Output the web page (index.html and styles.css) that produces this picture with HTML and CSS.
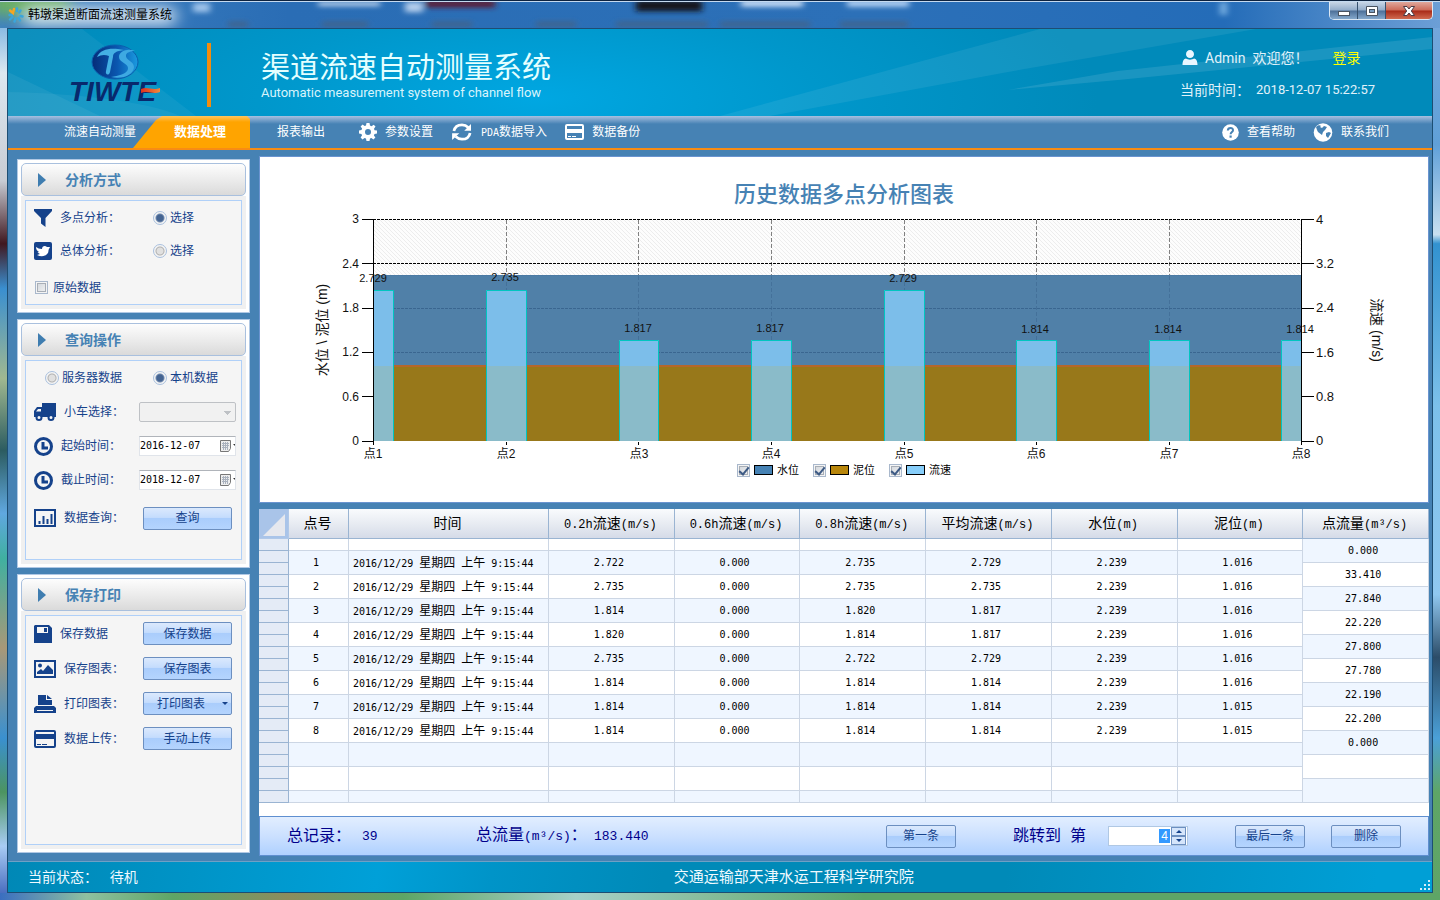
FILE: index.html
```html
<!DOCTYPE html>
<html lang="zh-CN">
<head>
<meta charset="utf-8">
<title>韩墩渠道断面流速测量系统</title>
<link rel="stylesheet" href="styles.css">
</head>
<body>
<div class="window">
  <div class="titlebar">
    <svg class="desktop-glass" viewBox="0 0 1440 28" preserveAspectRatio="none" aria-hidden="true">
      <defs>
        <filter id="soft" x="-20%" y="-60%" width="140%" height="220%"><feGaussianBlur stdDeviation="3"/></filter>
        <filter id="glow" x="-20%" y="-80%" width="140%" height="260%"><feGaussianBlur stdDeviation="8"/></filter>
      </defs>
      <rect x="-10" y="-10" width="80" height="24" fill="#6fb45c" filter="url(#glow)"/>
      <rect x="22" y="6" width="155" height="18" rx="9" fill="#e3edf5" filter="url(#glow)"/>
      <g filter="url(#soft)">
        <rect x="193" y="1" width="17" height="10" fill="#9ec3ea"/>
        <rect x="318" y="0" width="62" height="4" fill="#d5e4f6"/>
        <rect x="405" y="0" width="18" height="11" fill="#b3cdec"/>
        <rect x="425" y="-2" width="70" height="8" fill="#5b1b36"/>
        <rect x="636" y="-2" width="66" height="12" fill="#14141e"/>
        <rect x="741" y="-2" width="62" height="7" fill="#cbdff7"/>
        <rect x="847" y="-2" width="62" height="7" fill="#b5d3f5"/>
        <rect x="228" y="21" width="20" height="6" fill="#40658f"/>
        <rect x="322" y="21" width="46" height="6" fill="#40658f"/>
        <rect x="432" y="21" width="40" height="6" fill="#40658f"/>
        <rect x="536" y="21" width="40" height="6" fill="#40658f"/>
        <rect x="616" y="21" width="92" height="6" fill="#40658f"/>
        <rect x="720" y="21" width="90" height="6" fill="#40658f"/>
        <rect x="840" y="21" width="68" height="6" fill="#40658f"/>
        <rect x="1220" y="0" width="7" height="14" fill="#79b0e2"/>
      </g>
    </svg>
    <svg class="app-icon" viewBox="0 0 16 16" aria-hidden="true">
      <g fill="none" stroke="#3aa5dc" stroke-width="2.4" stroke-linecap="round"><path d="M9 1.5V4M12.5 3.5L11.3 5.5M12.5 9L14.5 9.5M10.5 11L12 13.5M7.5 11.5L6.5 14.5M4.5 10L2 12.5M4 8H1.5"/></g>
      <path d="M2 3.5L5 6L6 2" fill="none" stroke="#f5a623" stroke-width="2.4" stroke-linecap="round"/>
    </svg>
    <span class="window-title">韩墩渠道断面流速测量系统</span>
    <div class="window-buttons">
      <button class="win-btn" aria-label="最小化"><svg width="14" height="12" viewBox="0 0 14 12"><rect x="1.5" y="6.500" width="11" height="4" fill="#fff" stroke="#4a5360"/></svg></button>
      <button class="win-btn" aria-label="最大化"><svg width="14" height="12" viewBox="0 0 14 12"><path d="M1.500 1.500H12.500V10.500H1.500Z" fill="#fff" stroke="#4a5360"/><rect x="4.500" y="4.500" width="5" height="3" fill="#7aa0c4" stroke="#4a5360"/></svg></button>
      <button class="win-btn win-close" aria-label="关闭"><svg width="14" height="12" viewBox="0 0 14 12"><path d="M1.500 1.500H5L7 4L9 1.500H12.500L9.300 6L12.500 10.500H9L7 8L5 10.500H1.500L4.700 6Z" fill="#fff" stroke="#4a3b45"/></svg></button>
    </div>
  </div>

  <div class="client">
    <header class="banner">
      <svg class="banner-art" viewBox="0 0 1424 87" preserveAspectRatio="none" aria-hidden="true">
        <g fill="#fff">
          <path d="M0 0H74L188 87H0Z" opacity=".05"/>
          <path d="M0 43L92 87H0Z" opacity=".06"/>
          <path d="M0 63C60 64 140 72 172 87H0Z" opacity=".05"/>
          <path d="M712 87L1032 0H1248L1000 43L762 87Z" opacity=".07"/>
          <path d="M1000 61L1110 42L1424 8V20L1110 51Z" opacity=".10"/>
        </g>
      </svg>
      <svg class="logo" width="94" height="62" viewBox="0 0 94 62" role="img" aria-label="TIWTE">
        <defs><linearGradient id="globe" x1="0" y1="0" x2="1" y2="0"><stop offset="0" stop-color="#052c78"/><stop offset=".55" stop-color="#0a57b0"/><stop offset="1" stop-color="#1a9be0"/></linearGradient>
        <linearGradient id="flame" x1="0" y1="0" x2="1" y2="0"><stop offset="0" stop-color="#e0301e"/><stop offset="1" stop-color="#f08a3c"/></linearGradient></defs>
        <ellipse cx="47" cy="19" rx="23" ry="17" fill="url(#globe)" stroke="#0a5fae"/>
        <path d="M29 14C32 7 40 5 50 6L56 7C48 8 45 10 45 14L42 29C41 33 37 32 38 28L41 13C36 11 33 12 29 14Z" fill="#44b0e4"/>
        <path d="M67 8C60 5 51 8 51 14C51 20 61 20 60 26C59 31 50 33 43 34C55 37 66 31 66 24C66 18 57 17 58 12C59 9 63 8 67 8Z" fill="#3ea9e2"/>
        <text x="1" y="58" class="logo-text" font-size="28">TIWTE</text>
        <path d="M73 46C80 43 84 48 92 45V49C84 52 80 47 73 50Z" fill="url(#flame)"/>
      </svg>
      <div class="banner-rule"></div>
      <div class="banner-titles">
        <h1 class="banner-title">渠道流速自动测量系统</h1>
        <p class="banner-subtitle">Automatic measurement system of channel flow</p>
      </div>
      <div class="account">
        <div class="account-row">
          <svg width="16" height="16" viewBox="0 0 16 16" aria-hidden="true"><path d="M8 0C10.200 0 12 1.800 12 4.200S10.200 8 8 8S4 6.600 4 4.200S5.800 0 8 0ZM4 8.500C6 10 10 10 12 8.500C14 9 15.500 10.500 15.500 15H.5C.5 10.500 2 9 4 8.500Z" fill="#e9f6ff"/></svg>
          <span class="welcome">Admin&nbsp; 欢迎您！</span>
          <a class="login" href="#">登录</a>
        </div>
        <div class="account-row clock-row"><span class="clock-label">当前时间：</span><time class="clock-value">2018-12-07 15:22:57</time></div>
      </div>
    </header>

    <nav class="nav">
      <a class="nav-item nav-first" href="#">流速自动测量</a>
      <a class="nav-tab" href="#">数据处理</a>
      <a class="nav-item nav-report" href="#">报表输出</a>
      <a class="nav-item" href="#"><svg width="18" height="18" viewBox="0 0 18 18"><path fill-rule="evenodd" fill="#fff" d="M7.500 0H10.500L11 2.600L12.500 3.200L14.700 1.700L16.500 3.500L15 5.700L15.500 7.200L18 7.500V10.500L15.500 11L14.900 12.500L16.400 14.500L14.400 16.500L12.400 15L11 15.500L10.500 18H7.500L7 15.500L5.500 15L3.500 16.400L1.600 14.400L3 12.500L2.500 11L0 10.500V7.500L2.500 7L3.100 5.600L1.600 3.500L3.600 1.600L5.600 3.100L7 2.500ZM9 6A3 3 0 1 0 9 12A3 3 0 1 0 9 6Z"/></svg>参数设置</a>
      <a class="nav-item" href="#"><svg width="22" height="18" viewBox="0 0 24 20"><g fill="none" stroke="#fff" stroke-width="3"><path d="M3 9C4 4 8 2 12 2C15 2 17 3 19 5"/><path d="M21 11C20 16 16 18 12 18C9 18 7 17 5 15"/></g><path d="M22 1V8.500H14.500ZM1 19V11.500H9Z" fill="#fff"/></svg><span><b class="nav-latin">PDA</b>数据导入</span></a>
      <a class="nav-item nav-backup" href="#"><svg width="19" height="16" viewBox="0 0 19 16"><rect x="1" y="1" width="17" height="14" rx="1" fill="none" stroke="#fff" stroke-width="2"/><path d="M1 5H18V9H1Z" fill="#fff"/><path d="M3 12.500H6M7 12.500H11" stroke="#fff"/></svg>数据备份</a>
      <a class="nav-item nav-help" href="#"><svg width="17" height="17" viewBox="0 0 17 17"><circle cx="8.500" cy="8.500" r="8.300" fill="#fff"/><path d="M5.800 6.500C6 3 11.300 3.300 11 6.300C10.800 8 8.600 8 8.600 10.300" fill="none" stroke="#4682b4" stroke-width="2"/><rect x="7.500" y="11.500" width="2.200" height="2.200" fill="#4682b4"/></svg>查看帮助</a>
      <a class="nav-item nav-contact" href="#"><svg width="20" height="19" viewBox="0 0 20 19"><circle cx="10" cy="9.500" r="9.300" fill="#fff"/><path d="M3 4C5 2 7 2 8 3L7 4L9 5L11 3L14 4L12 7L10 9L9 12L5 9L4 7Z" fill="#4682b4"/><path d="M13 10L16 9L18 10L15 15L13 13Z" fill="#4682b4"/></svg>联系我们</a>
    </nav>

    <main class="workspace">
      <aside class="sidebar">
        <section class="panel panel-mode">
          <h2 class="panel-head">分析方式</h2>
          <div class="panel-body"><div class="box">
            <div class="row"><svg width="18" height="18" viewBox="0 0 18 18"><path d="M0 0H18V2L11.500 9V18L7 14.500V9L0 2Z" fill="#15428b"/></svg><span class="row-label">多点分析：</span><label class="choice choice-right"><input type="radio" name="mode" checked>选择</label></div>
            <div class="row"><svg width="18" height="18" viewBox="0 0 18 18"><rect width="18" height="18" rx="2" fill="#15428b"/><path d="M2 5C4 6 5 7 8 7C8 4 11 3 13 5L16 5L14.500 8C15 13 9 16 3 13L6 12L3.500 10.500L5 10C3 9 2 7 2 5Z" fill="#fff"/></svg><span class="row-label">总体分析：</span><label class="choice choice-right"><input type="radio" name="mode">选择</label></div>
            <div class="row row-tall"><label class="choice choice-check"><input type="checkbox">原始数据</label></div>
          </div></div>
        </section>

        <section class="panel panel-query">
          <h2 class="panel-head">查询操作</h2>
          <div class="panel-body"><div class="box">
            <div class="row row-pair"><label class="choice choice-left"><input type="radio" name="source">服务器数据</label><label class="choice choice-right"><input type="radio" name="source" checked>本机数据</label></div>
            <div class="row"><svg width="22" height="18" viewBox="0 0 22 18"><path fill="#15428b" fill-rule="evenodd" d="M8 0H22V14H0V8L3 4H8ZM4 6L2 8.500H7V6Z"/><g fill="#f4f4f4" stroke="#15428b" stroke-width="2"><circle cx="5" cy="14.500" r="2.500"/><circle cx="17" cy="14.500" r="2.500"/></g></svg><label class="row-label" for="car">小车选择：</label><select class="field" id="car" disabled><option></option></select></div>
            <div class="row"><svg width="19" height="19" viewBox="0 0 19 19"><circle cx="9.500" cy="9.500" r="8" fill="none" stroke="#15428b" stroke-width="3"/><path d="M9 5V11H14" fill="none" stroke="#15428b" stroke-width="3"/></svg><label class="row-label" for="from">起始时间：</label><span class="field date-field"><input id="from" type="text" value="2016-12-07"><button class="cal" aria-label="日历"><svg width="16" height="14" viewBox="0 0 16 14"><path d="M1.500 1.500H11.500V9.500L9.500 12.500H1.500Z" fill="#eee" stroke="#777"/><path d="M3 4.500H10M3 6.500H10M3 8.500H9M4.500 3V11M6.500 3V11M8.500 3V11" stroke="#aab2be"/><path d="M14 5H16V7Z" fill="#333"/></svg></button></span></div>
            <div class="row"><svg width="19" height="19" viewBox="0 0 19 19"><circle cx="9.500" cy="9.500" r="8" fill="none" stroke="#15428b" stroke-width="3"/><path d="M9 5V11H14" fill="none" stroke="#15428b" stroke-width="3"/></svg><label class="row-label" for="to">截止时间：</label><span class="field date-field"><input id="to" type="text" value="2018-12-07"><button class="cal" aria-label="日历"><svg width="16" height="14" viewBox="0 0 16 14"><path d="M1.500 1.500H11.500V9.500L9.500 12.500H1.500Z" fill="#eee" stroke="#777"/><path d="M3 4.500H10M3 6.500H10M3 8.500H9M4.500 3V11M6.500 3V11M8.500 3V11" stroke="#aab2be"/><path d="M14 5H16V7Z" fill="#333"/></svg></button></span></div>
            <div class="row row-tall"><svg width="22" height="18" viewBox="0 0 22 18"><rect x="1" y="1" width="20" height="16" fill="none" stroke="#15428b" stroke-width="2"/><path d="M5.500 12V15M9.500 7V15M13.500 10V15M17.500 5V15" stroke="#15428b" stroke-width="2"/></svg><span class="row-label">数据查询：</span><button class="btn side-btn">查询</button></div>
          </div></div>
        </section>

        <section class="panel panel-save">
          <h2 class="panel-head">保存打印</h2>
          <div class="panel-body"><div class="box">
            <div class="row"><svg width="18" height="18" viewBox="0 0 18 18"><path d="M1 0H15L18 3V18H0V1Z" fill="#15428b"/><path d="M3 2H14V8H3Z" fill="#f4f4f4"/><path d="M10 3H13V7H10Z" fill="#15428b"/></svg><span class="row-label">保存数据</span><button class="btn side-btn">保存数据</button></div>
            <div class="row"><svg width="22" height="18" viewBox="0 0 22 18"><rect x="1" y="1" width="20" height="16" fill="none" stroke="#15428b" stroke-width="2"/><circle cx="6" cy="5.500" r="2" fill="#15428b"/><path d="M3 14V12L7 9L9 11L14 5L19 10V14Z" fill="#15428b"/></svg><span class="row-label">保存图表：</span><button class="btn side-btn">保存图表</button></div>
            <div class="row"><svg width="22" height="18" viewBox="0 0 22 18"><path d="M4 0H12V5H18V10H4Z" fill="#15428b"/><path d="M13 0L18 4H13Z" fill="#15428b"/><path d="M2 11H20L22 13V18H0V13Z" fill="#15428b"/><path d="M3 15.500H19" stroke="#f4f4f4"/></svg><span class="row-label">打印图表：</span><button class="btn side-btn split-btn">打印图表<svg width="7" height="4" viewBox="0 0 7 4"><path d="M0 0H6L3 3Z" fill="#15428b"/></svg></button></div>
            <div class="row"><svg width="22" height="18" viewBox="0 0 22 18"><rect x="1" y="1" width="20" height="16" rx="1" fill="none" stroke="#15428b" stroke-width="2"/><path d="M1 4H21V9H1Z" fill="#15428b"/><path d="M3 14.500H7M8 14.500H13" stroke="#15428b"/></svg><span class="row-label">数据上传：</span><button class="btn side-btn">手动上传</button></div>
          </div></div>
        </section>
      </aside>

      <div class="content">
        <section class="chart-panel">
          <h2 class="chart-title">历史数据多点分析图表</h2>
          <svg class="chart" viewBox="0 0 1168 251">
            <defs>
              <pattern id="hatch" width="4" height="4" patternUnits="userSpaceOnUse"><rect width="4" height="4" fill="#fdfdfd"/><path d="M-1 -1L5 5M-1 3L1 5M3 -1L5 1" stroke="#ededed"/></pattern>
              <clipPath id="plot"><rect x="113" y="0" width="928" height="229"/></clipPath>
            </defs>
            <rect x="113" y="7" width="928" height="222" fill="url(#hatch)"/>
            <rect x="113" y="63" width="928" height="91" fill="#5080a8"/>
            <path d="M113 63.500H1041" stroke="#4b7aa4"/>
            <g stroke="#808080" stroke-dasharray="4 2"><path d="M246.500 8V63M378.500 8V63M511.500 8V63M644.500 8V63M776.500 8V63M909.500 8V63"/></g>
            <g stroke="#44719a" stroke-dasharray="4 2"><path d="M246.500 64V153M378.500 64V153M511.500 64V153M644.500 64V153M776.500 64V153M909.500 64V153"/></g>
            <g stroke-dasharray="3 1"><path d="M113 7.500H1041M113 51.500H1041" stroke="#000"/><path d="M113 96.500H1041M113 140.500H1041" stroke="#3a6690"/></g>
            <rect x="113" y="154" width="928" height="75" fill="#98781a"/>
            <path d="M113 154H1041" stroke="#b3672c" stroke-width="2"/>
            <g clip-path="url(#plot)">
              <g fill="#7cbeea"><rect x="93" y="78" width="40" height="151"/><rect x="226" y="78" width="40" height="151"/><rect x="359" y="128" width="40" height="101"/><rect x="491" y="128" width="40" height="101"/><rect x="624" y="78" width="40" height="151"/><rect x="756" y="128" width="40" height="101"/><rect x="889" y="128" width="40" height="101"/><rect x="1021" y="128" width="40" height="101"/></g>
              <g fill="#8abbc9"><rect x="93" y="154" width="40" height="75"/><rect x="226" y="154" width="40" height="75"/><rect x="359" y="154" width="40" height="75"/><rect x="491" y="154" width="40" height="75"/><rect x="624" y="154" width="40" height="75"/><rect x="756" y="154" width="40" height="75"/><rect x="889" y="154" width="40" height="75"/><rect x="1021" y="154" width="40" height="75"/></g>
              <path fill="none" stroke="#00c5c0" d="M93.500 229V78.500H133.500V229M226.500 229V78.500H266.500V229M359.500 229V128.500H398.500V229M491.500 229V128.500H531.500V229M624.500 229V78.500H664.500V229M756.500 229V128.500H796.500V229M889.500 229V128.500H929.500V229M1021.500 229V128.500H1061.500V229"/>
            </g>
            <path fill="none" stroke="#000" d="M113.500 7V229M1041.500 7V229M102 7.500H113M102 51.500H113M102 96.500H113M102 140.500H113M102 184.500H113M102 229.500H113M1041 7.500H1054M1041 51.500H1054M1041 96.500H1054M1041 140.500H1054M1041 184.500H1054M1041 229.500H1054M113.500 229V233M246.500 230V233M378.500 230V233M511.500 230V233M644.500 230V233M776.500 230V233M909.500 230V233M1041.500 229V233"/>
            <g class="tick-left"><text x="99" y="11">3</text><text x="99" y="56">2.4</text><text x="99" y="100">1.8</text><text x="99" y="144">1.2</text><text x="99" y="189">0.6</text><text x="99" y="233">0</text></g>
            <g class="tick-right"><text x="1056" y="12">4</text><text x="1056" y="56">3.2</text><text x="1056" y="100">2.4</text><text x="1056" y="145">1.6</text><text x="1056" y="189">0.8</text><text x="1056" y="233">0</text></g>
            <g class="bar-value"><text x="113" y="70">2.729</text><text x="245" y="69">2.735</text><text x="378" y="120">1.817</text><text x="510" y="120">1.817</text><text x="643" y="70">2.729</text><text x="775" y="121">1.814</text><text x="908" y="121">1.814</text><text x="1040" y="121">1.814</text></g>
            <g class="category"><text x="113" y="246">点1</text><text x="246" y="246">点2</text><text x="379" y="246">点3</text><text x="511" y="246">点4</text><text x="644" y="246">点5</text><text x="776" y="246">点6</text><text x="909" y="246">点7</text><text x="1041" y="246">点8</text></g>
            <text class="axis-title" transform="translate(67 118) rotate(-90)">水位 \ 泥位 (m)</text>
            <text class="axis-title" transform="translate(1112 118) rotate(90)">流速 (m/s)</text>
          </svg>
          <div class="legend">
            <label class="legend-item"><input type="checkbox" checked><span class="swatch swatch-water"></span>水位</label>
            <label class="legend-item"><input type="checkbox" checked><span class="swatch swatch-mud"></span>泥位</label>
            <label class="legend-item"><input type="checkbox" checked><span class="swatch swatch-speed"></span>流速</label>
          </div>
        </section>

        <div class="grid-area">
          <table class="grid">
            <colgroup><col class="c-mark"><col class="c-no"><col class="c-time"><col><col><col><col><col><col><col></colgroup>
            <thead><tr><th class="corner"><svg width="24" height="24" viewBox="0 0 24 24" aria-hidden="true"><path d="M23 1V23H1Z" fill="#e6e8ee"/></svg></th><th><i>点号</i></th><th><i>时间</i></th><th>0.2h<i>流速</i>(m/s)</th><th>0.6h<i>流速</i>(m/s)</th><th>0.8h<i>流速</i>(m/s)</th><th><i>平均流速</i>(m/s)</th><th><i>水位</i>(m)</th><th><i>泥位</i>(m)</th><th><i>点流量</i>(m³/s)</th></tr></thead>
            <tbody>
              <tr><td class="mark"></td><td></td><td></td><td></td><td></td><td></td><td></td><td></td><td></td><td rowspan="2" class="alt">0.000</td></tr>
              <tr class="alt"><td class="mark"></td><td rowspan="2">1</td><td rowspan="2" class="time">2016/12/29 <i>星期四</i> <i>上午</i> 9:15:44</td><td rowspan="2">2.722</td><td rowspan="2">0.000</td><td rowspan="2">2.735</td><td rowspan="2">2.729</td><td rowspan="2">2.239</td><td rowspan="2">1.016</td></tr>
              <tr><td class="mark"></td><td rowspan="2">33.410</td></tr>
              <tr><td class="mark"></td><td rowspan="2">2</td><td rowspan="2" class="time">2016/12/29 <i>星期四</i> <i>上午</i> 9:15:44</td><td rowspan="2">2.735</td><td rowspan="2">0.000</td><td rowspan="2">2.735</td><td rowspan="2">2.735</td><td rowspan="2">2.239</td><td rowspan="2">1.016</td></tr>
              <tr><td class="mark"></td><td rowspan="2" class="alt">27.840</td></tr>
              <tr class="alt"><td class="mark"></td><td rowspan="2">3</td><td rowspan="2" class="time">2016/12/29 <i>星期四</i> <i>上午</i> 9:15:44</td><td rowspan="2">1.814</td><td rowspan="2">0.000</td><td rowspan="2">1.820</td><td rowspan="2">1.817</td><td rowspan="2">2.239</td><td rowspan="2">1.016</td></tr>
              <tr><td class="mark"></td><td rowspan="2">22.220</td></tr>
              <tr><td class="mark"></td><td rowspan="2">4</td><td rowspan="2" class="time">2016/12/29 <i>星期四</i> <i>上午</i> 9:15:44</td><td rowspan="2">1.820</td><td rowspan="2">0.000</td><td rowspan="2">1.814</td><td rowspan="2">1.817</td><td rowspan="2">2.239</td><td rowspan="2">1.016</td></tr>
              <tr><td class="mark"></td><td rowspan="2" class="alt">27.800</td></tr>
              <tr class="alt"><td class="mark"></td><td rowspan="2">5</td><td rowspan="2" class="time">2016/12/29 <i>星期四</i> <i>上午</i> 9:15:44</td><td rowspan="2">2.735</td><td rowspan="2">0.000</td><td rowspan="2">2.722</td><td rowspan="2">2.729</td><td rowspan="2">2.239</td><td rowspan="2">1.016</td></tr>
              <tr><td class="mark"></td><td rowspan="2">27.780</td></tr>
              <tr><td class="mark"></td><td rowspan="2">6</td><td rowspan="2" class="time">2016/12/29 <i>星期四</i> <i>上午</i> 9:15:44</td><td rowspan="2">1.814</td><td rowspan="2">0.000</td><td rowspan="2">1.814</td><td rowspan="2">1.814</td><td rowspan="2">2.239</td><td rowspan="2">1.016</td></tr>
              <tr><td class="mark"></td><td rowspan="2" class="alt">22.190</td></tr>
              <tr class="alt"><td class="mark"></td><td rowspan="2">7</td><td rowspan="2" class="time">2016/12/29 <i>星期四</i> <i>上午</i> 9:15:44</td><td rowspan="2">1.814</td><td rowspan="2">0.000</td><td rowspan="2">1.814</td><td rowspan="2">1.814</td><td rowspan="2">2.239</td><td rowspan="2">1.015</td></tr>
              <tr><td class="mark"></td><td rowspan="2">22.200</td></tr>
              <tr><td class="mark"></td><td rowspan="2">8</td><td rowspan="2" class="time">2016/12/29 <i>星期四</i> <i>上午</i> 9:15:44</td><td rowspan="2">1.814</td><td rowspan="2">0.000</td><td rowspan="2">1.814</td><td rowspan="2">1.814</td><td rowspan="2">2.239</td><td rowspan="2">1.015</td></tr>
              <tr><td class="mark"></td><td rowspan="2" class="alt">0.000</td></tr>
              <tr class="alt"><td class="mark"></td><td rowspan="2"></td><td rowspan="2"></td><td rowspan="2"></td><td rowspan="2"></td><td rowspan="2"></td><td rowspan="2"></td><td rowspan="2"></td><td rowspan="2"></td></tr>
              <tr><td class="mark"></td><td rowspan="2"></td></tr>
              <tr><td class="mark"></td><td rowspan="2"></td><td rowspan="2"></td><td rowspan="2"></td><td rowspan="2"></td><td rowspan="2"></td><td rowspan="2"></td><td rowspan="2"></td><td rowspan="2"></td></tr>
              <tr><td class="mark"></td><td rowspan="2" class="alt"></td></tr>
              <tr class="alt"><td class="mark"></td><td></td><td></td><td></td><td></td><td></td><td></td><td></td><td></td></tr>
            </tbody>
          </table>
        </div>

        <div class="pager">
          <span class="pager-total">总记录：</span><span class="pager-count"><b>39</b></span>
          <span class="pager-flow">总流量<b>(m³/s)</b>：</span><span><b>183.440</b></span>
          <button class="btn pager-btn pager-first">第一条</button>
          <label class="pager-jump" for="page">跳转到&nbsp; 第</label>
          <span class="spinner"><input id="page" type="text" value="4"><span class="spin-btns"><button aria-label="增加"><svg width="6" height="3" viewBox="0 0 6 3"><path d="M3 0L6 3H0Z" fill="#15428b"/></svg></button><button aria-label="减少"><svg width="6" height="3" viewBox="0 0 6 3"><path d="M3 3L6 0H0Z" fill="#15428b"/></svg></button></span></span>
          <button class="btn pager-btn pager-last">最后一条</button>
          <button class="btn pager-btn">删除</button>
        </div>
      </div>
    </main>

    <footer class="status">
      <span class="status-state">当前状态：&nbsp;&nbsp; 待机</span>
      <span class="status-owner">交通运输部天津水运工程科学研究院</span>
      <svg class="grip" width="12" height="12" viewBox="0 0 12 12" aria-hidden="true"><path fill="#d7eef9" d="M9 0H11V2H9ZM5 4H7V6H5ZM9 4H11V6H9ZM1 8H3V10H1ZM5 8H7V10H5ZM9 8H11V10H9Z"/></svg>
    </footer>
  </div>
</div>
</body>
</html>
```
FILE: styles.css
```css
* { box-sizing: border-box; }

body {
  margin: 0;
  font: 12px/16px "Liberation Sans", "Noto Sans CJK SC", sans-serif;
  color: #15428b;
}

h1, h2, p { margin: 0; font-weight: normal; }
a { color: inherit; text-decoration: none; }
svg { display: block; flex: none; }
i, b { font-style: normal; font-weight: normal; }
button, input, select { font: inherit; color: inherit; margin: 0; padding: 0; }

/* window frame */
.window {
  position: relative;
  display: flex;
  flex-direction: column;
  min-height: 100vh;
  padding: 0 7px 7px;
  border-top: 1px solid #0d2340;
  background:
    linear-gradient(90deg, #3a6ec0, #8fc0a0 6%, #5ea566 12%, #8c8c5e 20%, #5ea566 28%, #a8d0c8 40%, #5ea566 60%, #5ea566) bottom / 100% 7px no-repeat,
    linear-gradient(180deg, #5aa0dc, #dce8f0 8%, #c8ccd4 20%, #401820 27%, #3a8fd0 32%, #a0b890 42%, #2c5c60 50%, #60a8e0 57%, #40b0a0 62%, #a89878 72%, #3a90d0 82%, #4c9460 88%, #a8ccf4 94%, #3c60b8) left / 7px 100% no-repeat,
    linear-gradient(180deg, #78a8dc, #60a0d8 16%, #c8e0f0 26%, #3292d0 27%, #7cc0ea 45%, #90c8f0 66%, #2c4c68 73%, #4ba0d8 82%, #5ea566 88%, #60a468) right / 7px 100% no-repeat,
    #2a6fb8;
}

.titlebar {
  position: relative;
  display: flex;
  align-items: center;
  height: 27px;
  margin: 0 -7px;
  padding-left: 8px;
  gap: 4px;
  background: linear-gradient(90deg, #3f82c0, #2a6db5 20%, #2c70b8 60%, #246cb8 85%, #6c9fd6);
  border-top: 1px solid #c5daf0;
}
.desktop-glass { position: absolute; left: 0; top: 0; width: 100%; height: 100%; }
.app-icon { position: relative; width: 16px; height: 16px; }
.window-title { position: relative; color: #000; }
.window-buttons {
  position: relative;
  display: flex;
  align-self: flex-start;
  margin-left: auto;
  margin-right: 7px;
  border: 1px solid #dce8f4;
  border-top: 0;
  border-radius: 0 0 5px 5px;
  overflow: hidden;
}
.win-btn {
  display: grid;
  place-items: center;
  width: 28px;
  height: 17px;
  border: 0;
  border-right: 1px solid #35506e;
  background: linear-gradient(#c8d6e6, #92acca 48%, #4c6f98 52%, #84a8cc);
}
.win-close { width: 46px; border-right: 0; background: linear-gradient(#e0a89c, #cc6a58 48%, #a82a18 52%, #d06a50); }

.client {
  display: flex;
  flex: 1;
  flex-direction: column;
  border: 1px solid #1d4e73;
  background: #4682b4;
}

/* banner */
.banner {
  position: relative;
  display: flex;
  align-items: flex-start;
  height: 87px;
  padding: 14px 57px 0 60px;
  background: radial-gradient(ellipse 560px 170px at 530px 70px, #00a7e2, #0097cb 50%, #008aba);
}
.banner-art { position: absolute; left: 0; top: 0; width: 100%; height: 100%; }
.logo { position: relative; }
.logo-text { font-family: "Liberation Sans", sans-serif; font-weight: bold; font-style: italic; fill: #08296c; }
.banner-rule { position: relative; width: 4px; height: 64px; margin-left: 45px; background: #f48c0c; }
.banner-titles { position: relative; padding: 2px 0 0 50px; }
.banner-title { font: 400 29px/40px "Noto Sans CJK SC", sans-serif; color: #e4ffff; }
.banner-subtitle { font: 13px/16px Roboto, sans-serif; color: #d8f4fc; }
.account { position: relative; margin-left: auto; padding-top: 3px; color: #e0f2fa; }
.account-row { display: flex; align-items: center; height: 24px; padding-left: 2px; }
.welcome { margin-left: 7px; font: 14px/20px Roboto, "Noto Sans CJK SC", sans-serif; }
.login { margin-left: 24px; font-size: 14px; line-height: 20px; color: #ffff00; }
.clock-row { height: 40px; padding-left: 0; }
.clock-label { font-size: 14px; width: 76px; }
.clock-value { font: 13px/20px Roboto, sans-serif; }

/* navigation */
.nav {
  display: flex;
  align-items: stretch;
  height: 34px;
  padding-left: 56px;
  border-bottom: 2px solid #f88c14;
  background: linear-gradient(#a8c0e0, #4682b4 8px);
  color: #fff;
}
.nav-item { display: flex; align-items: center; gap: 8px; margin-right: 18px; white-space: nowrap; }
.nav-first { margin-right: 0; }
.nav-tab {
  width: 117px;
  margin-left: -3px;
  padding-left: 41px;
  clip-path: polygon(0 100%, 23px 4px, 29px 0, 114px 0, 100% 3px, 100% 100%);
  background: linear-gradient(#ffc45c, #ffa400 6px);
  font-weight: bold;
  font-size: 13px;
  line-height: 32px;
}
.nav-report { margin-left: 27px; margin-right: 34px; }
.nav-latin { font: 10px/16px "DejaVu Sans Mono", monospace; }
.nav-help { margin-left: auto; }
.nav-contact { margin-right: 43px; }

/* workspace */
.workspace {
  display: grid;
  flex: 1;
  grid-template-columns: 233px minmax(0, 1fr);
  gap: 9px;
  padding: 6px 3px 5px 9px;
}
.sidebar { display: flex; flex-direction: column; gap: 6px; padding: 3px 0; }
.panel {
  display: flex;
  flex-direction: column;
  padding: 3px;
  border: 1px solid #b0c8e4;
  background: #fff;
}
.panel-mode { min-height: 154px; }
.panel-query { min-height: 249px; }
.panel-save { flex: 1; }
.panel-head {
  display: flex;
  align-items: center;
  height: 33px;
  padding-left: 16px;
  border: 1px solid #a9c0de;
  border-radius: 5px;
  background: linear-gradient(#fdfdfd, #ececec 50%, #dadada);
  font-size: 14px;
  font-weight: bold;
  color: #4682b4;
}
.panel-head::before {
  content: "";
  width: 0;
  margin-right: 19px;
  border: 7px solid transparent;
  border-left: 8px solid #3f7db0;
  border-right: 0;
}
.panel-body { display: flex; flex: 1; padding: 4px; background: #f0f0f0; }
.box { flex: 1; border: 1px solid #b0d0f8; background: #f5f5f5; }

.row { display: flex; align-items: center; height: 34px; padding: 0 5px 0 8px; gap: 8px; }
.panel-save .row { height: 35px; }
.row.row-tall { height: 42px; }
.panel-mode .row { height: 33px; }
.panel-mode .row.row-tall { height: 37px; padding-top: 4px; }
.row-label { white-space: nowrap; }
.choice { display: flex; align-items: center; gap: 3px; white-space: nowrap; }
.choice-right { margin-left: auto; width: 83px; }
.choice-left { margin-left: 11px; }
.choice-check { gap: 5px; margin-left: 1px; }

input[type="radio"] {
  appearance: none;
  width: 14px;
  height: 14px;
  border: 1px solid #a9c0de;
  border-radius: 50%;
  background: radial-gradient(circle, #e0e0e0 3px, #b0b0b0 4px, #f4f4f4 5px);
}
input[type="radio"]:checked { background: radial-gradient(circle, #446492 3px, #6f88ac 4px, #f4f4f4 5px); }
input[type="checkbox"] {
  appearance: none;
  display: grid;
  place-items: center;
  width: 13px;
  height: 13px;
  border: 1px solid #a9b8cc;
  background: linear-gradient(135deg, #cfd4da, #f4f4f4);
  box-shadow: inset 0 0 0 1px #f4f4f4, inset 0 0 0 2px #a8aeb6;
}
.legend input[type="checkbox"]:checked::after {
  content: "";
  width: 4px;
  height: 8px;
  border: solid #3d5a84;
  border-width: 0 2px 2px 0;
  transform: rotate(40deg);
}

.field { width: 97px; height: 20px; margin-left: auto; }
select.field {
  appearance: none;
  border: 1px solid #a8acb2;
  border-radius: 2px;
  background: conic-gradient(from -45deg at 50% 100%, #a8acb2 90deg, transparent 0) 84px 8px / 8px 4px no-repeat, #f0f0f0;
  background: linear-gradient(to top right, transparent 50%, #a8acb2 50%) 84px 8px / 4px 4px no-repeat, linear-gradient(to top left, transparent 50%, #a8acb2 50%) 88px 8px / 4px 4px no-repeat, #f0f0f0;
}
.date-field { display: flex; align-items: center; border: 1px solid #e0e4ea; border-top-color: #b0b4ba; background: #fff; }
.date-field input { width: 79px; border: 0; background: none; font: 10px/16px "DejaVu Sans Mono", monospace; color: #000; }
.cal { border: 0; background: none; }

.btn {
  border: 1px solid #6c8fc0;
  border-radius: 2px;
  background: linear-gradient(#dbe9fd, #c4dcfd 45%, #aacdfc 50%, #b4d4fe);
  color: #15428b;
  line-height: 16px;
}
.side-btn { width: 89px; height: 23px; margin-left: auto; margin-right: 4px; }
.split-btn { display: flex; align-items: center; justify-content: flex-end; gap: 17px; padding-right: 2px; }

/* chart */
.content { display: flex; flex-direction: column; min-width: 0; }
.chart-panel { padding-bottom: 25px; border: 1px solid #6a94d0; background: #fff; }
.chart-title { padding-top: 18px; padding-bottom: 2px; text-align: center; font: 500 22px/35px "Noto Sans CJK SC", sans-serif; color: #4682b4; }
.chart { width: 100%; height: auto; font-family: "Liberation Sans", "Noto Sans CJK SC", sans-serif; fill: #111; }
.tick-left { font-size: 12px; text-anchor: end; }
.tick-right { font-size: 13px; }
.bar-value { font-size: 11px; text-anchor: middle; }
.category { font-size: 12px; text-anchor: middle; }
.axis-title { font-size: 14px; text-anchor: middle; }
.legend { display: flex; justify-content: center; gap: 14px; color: #000; font-size: 11px; line-height: 14px; }
.legend-item { display: flex; align-items: center; gap: 4px; }
.swatch { width: 19px; height: 10px; border: 1px solid #000; }
.swatch-water { background: #4682b4; }
.swatch-mud { background: #b8860b; }
.swatch-speed { background: #87cefa; }

/* data grid */
.grid-area { flex: 1; margin-top: 6px; padding-bottom: 13px; background: #fff; }
.grid { width: 100%; border-collapse: separate; border-spacing: 0; table-layout: fixed; color: #000; }
.c-mark { width: 30px; }
.c-no { width: 60px; }
.c-time { width: 200px; }
.grid th {
  height: 30px;
  padding: 0 2px 0 0;
  border-right: 1px solid #9ab4d2;
  border-bottom: 1px solid #9ab4d2;
  background: linear-gradient(#f9fbfd, #e6eaf1 55%, #d5dbe8);
  font: 12px/20px "Liberation Mono", monospace;
}
.grid th i { font: 14px/20px "Noto Sans CJK SC", sans-serif; }
.grid th.corner { padding: 3px 0 0 3px; border-color: #b0c8e8; background: #a9c4e9; }
.grid tbody tr { height: 12px; }
.grid td {
  height: 12px;
  padding: 0 5px 0 0;
  border-right: 1px solid #ccd6e4;
  border-bottom: 1px solid #ccd6e4;
  text-align: center;
  font: 10px/12px "DejaVu Sans Mono", monospace;
  background: #fff;
}
.grid .alt td, .grid td.alt { background: #eff6ff; }
.grid td i { font: 12px/12px "Noto Sans CJK SC", sans-serif; }
.grid td.time { padding-left: 4px; text-align: left; white-space: nowrap; }
.grid tr td.mark { border-color: #9ab4d2; background: #e4ebf6; }

/* record bar */
.pager {
  display: flex;
  align-items: center;
  height: 40px;
  padding: 0 27px;
  border: 1px solid #5f8fd0;
  background: linear-gradient(#e2eeff, #cbe0ff 50%, #afd1ff);
  color: #00008b;
  font-size: 16px;
  line-height: 20px;
  white-space: nowrap;
}
.pager b { font: 13px/20px "Liberation Mono", monospace; }
.pager-total { width: 75px; }
.pager-count { width: 114px; }
.pager-flow { width: 118px; }
.pager-btn { width: 70px; height: 23px; font-size: 12px; }
.pager-first { margin-left: auto; }
.pager-jump { margin: 0 22px 0 57px; }
.pager-last { margin: 0 26px 0 47px; }
.spinner { display: flex; justify-content: flex-end; align-items: center; gap: 1px; width: 80px; height: 20px; padding-right: 1px; border: 1px solid #b0c8e4; background: #fff; }
.spinner input { width: 11px; height: 14px; border: 0; background: #3399ff; color: #fff; text-align: center; font: 12px/14px "Liberation Sans", sans-serif; }
.spin-btns { display: flex; flex-direction: column; }
.spin-btns button { display: grid; place-items: center; width: 15px; height: 9px; border: 1px solid #6c8fc0; background: #d5e5fb; }

/* status bar */
.status {
  position: relative;
  display: flex;
  align-items: center;
  height: 31px;
  padding: 0 0 0 20px;
  border-top: 1px solid #6fa0c4;
  background: linear-gradient(100deg, #0088b6, #00a0d8 26%, #0094c8 34%, #008ab8 46%, #008ab8 70%, #009fd6 96%);
  color: #f0faff;
  font-size: 14px;
}
.status-state { flex: 0 0 46%; }
.status-owner { font-size: 15px; }
.grip { position: absolute; right: 1px; bottom: 0; }
```
